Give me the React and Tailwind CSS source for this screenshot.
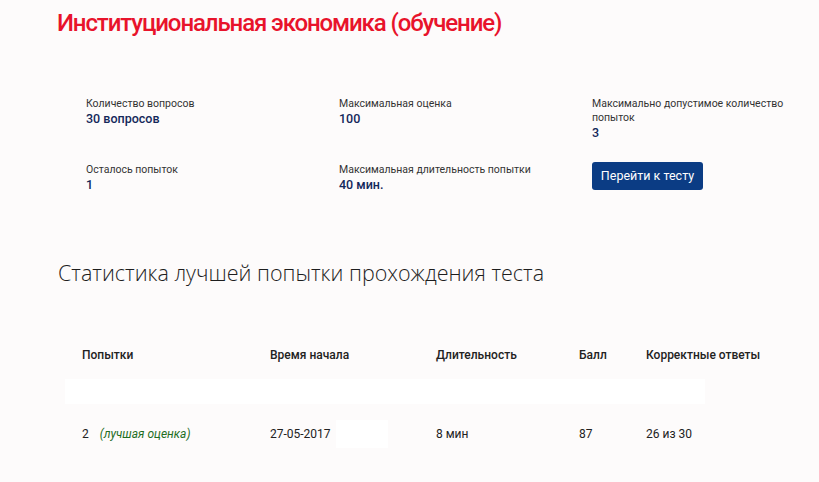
export default function App() {
  const topRow = [
    { label: "Количество вопросов", value: "30 вопросов" },
    { label: "Максимальная оценка", value: "100" },
    { label: "Максимально допустимое количество попыток", value: "3" },
  ];

  return (
    <div className="min-h-screen bg-[#fdfbfb] font-['Roboto',sans-serif] text-[#222]">
      <h1 className="pl-[57px] pt-[5px] text-[24px] leading-[36px] font-medium tracking-[-1.1px] text-[#e8132b]">
        Институциональная экономика (обучение)
      </h1>

      <div className="mt-[56px] pl-[86px]">
        <div className="grid grid-cols-[253px_253px_218px] h-[65px]">
          {topRow.map((item) => (
            <div key={item.label}>
              <div className="text-[10.5px] leading-[14px] text-[#333]">{item.label}</div>
              <div className="text-[12.5px] leading-[16px] font-medium text-[#14285a]">{item.value}</div>
            </div>
          ))}
        </div>
        <div className="grid grid-cols-[253px_253px_218px] items-start">
          <div className="pt-[1px]">
            <div className="text-[10.5px] leading-[14px] text-[#333]">Осталось попыток</div>
            <div className="text-[12.5px] leading-[16px] font-medium text-[#14285a]">1</div>
          </div>
          <div className="pt-[1px]">
            <div className="text-[10.5px] leading-[14px] text-[#333]">Максимальная длительность попытки</div>
            <div className="text-[12.5px] leading-[16px] font-medium text-[#14285a]">40 мин.</div>
          </div>
          <div>
            <button className="w-[111px] h-[28px] rounded-[3px] bg-[#0b3c84] text-[12.5px] text-white">
              Перейти к тесту
            </button>
          </div>
        </div>
      </div>

      <h2 className="mt-[66px] pl-[58px] text-[21.5px] leading-[28px] font-light text-[#1e1e1e] font-['Open_Sans',sans-serif]">
        Статистика лучшей попытки прохождения теста
      </h2>

      <div className="mt-[44px] ml-[65px] w-[640px]">
        <div className="grid grid-cols-[205px_166px_143px_67px_1fr] h-[48px] items-center whitespace-nowrap text-[12px] font-medium text-[#222]">
          <div className="pl-[17px]">Попытки</div>
          <div>Время начала</div>
          <div>Длительность</div>
          <div>Балл</div>
          <div>Корректные ответы</div>
        </div>
        <div className="h-[25px] bg-white"></div>
        <div className="grid grid-cols-[205px_166px_143px_67px_1fr] h-[60px] items-center whitespace-nowrap text-[12px] text-[#222]">
          <div className="pl-[17px] flex items-center gap-[11px]">
            <span>2</span>
            <span className="italic text-[#1f6e1f]">(лучшая оценка)</span>
          </div>
          <div className="flex items-center gap-[5px]">
            <span>27-05-2017</span>
            <span className="inline-block w-[52px] h-[28px] bg-white"></span>
          </div>
          <div>8 мин</div>
          <div>87</div>
          <div>26 из 30</div>
        </div>
      </div>
    </div>
  );
}
